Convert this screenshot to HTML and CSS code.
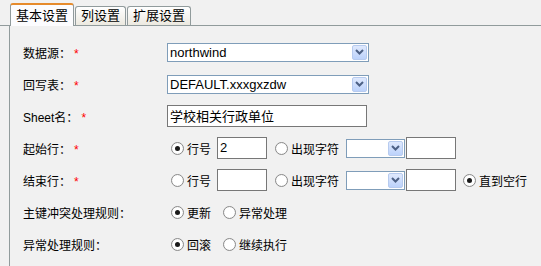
FILE: index.html
```html
<!DOCTYPE html>
<html lang="zh-CN">
<head>
  <meta charset="UTF-8" />
  <title>基本设置</title>
  <link rel="stylesheet" href="styles.css">
</head>
<body>

<div class="tabs">
  <div class="tab active">基本设置</div>
  <div class="tab">列设置</div>
  <div class="tab">扩展设置</div>
</div>

<div class="panel">
  <div class="row">
    <div class="label">数据源：<span class="req">*</span></div>
    <div class="ctrl">
      <div class="select wide"><span>northwind</span><i class="btn"><svg width="9" height="6" viewBox="0 0 9 6"><path d="M1 1l3.5 3.5L8 1" fill="none" stroke="#4d6185" stroke-width="2"/></svg></i></div>
    </div>
  </div>

  <div class="row">
    <div class="label">回写表：<span class="req">*</span></div>
    <div class="ctrl">
      <div class="select wide"><span>DEFAULT.xxxgxzdw</span><i class="btn"><svg width="9" height="6" viewBox="0 0 9 6"><path d="M1 1l3.5 3.5L8 1" fill="none" stroke="#4d6185" stroke-width="2"/></svg></i></div>
    </div>
  </div>

  <div class="row">
    <div class="label">Sheet名：<span class="req">*</span></div>
    <div class="ctrl">
      <div class="input wide">学校相关行政单位</div>
    </div>
  </div>

  <div class="row">
    <div class="label">起始行：<span class="req">*</span></div>
    <div class="ctrl">
      <span class="radio on"></span><span class="opt">行号</span>
      <div class="input small">2</div>
      <span class="radio"></span><span class="opt">出现字符</span>
      <div class="select short"><span></span><i class="btn"><svg width="9" height="6" viewBox="0 0 9 6"><path d="M1 1l3.5 3.5L8 1" fill="none" stroke="#4d6185" stroke-width="2"/></svg></i></div>
      <div class="input small"></div>
    </div>
  </div>

  <div class="row">
    <div class="label">结束行：<span class="req">*</span></div>
    <div class="ctrl">
      <span class="radio"></span><span class="opt">行号</span>
      <div class="input small"></div>
      <span class="radio"></span><span class="opt">出现字符</span>
      <div class="select short"><span></span><i class="btn"><svg width="9" height="6" viewBox="0 0 9 6"><path d="M1 1l3.5 3.5L8 1" fill="none" stroke="#4d6185" stroke-width="2"/></svg></i></div>
      <div class="input small"></div>
      <span class="radio on gap"></span><span class="opt">直到空行</span>
    </div>
  </div>

  <div class="row">
    <div class="label">主键冲突处理规则：</div>
    <div class="ctrl">
      <span class="radio on"></span><span class="opt pair">更新</span>
      <span class="radio"></span><span class="opt">异常处理</span>
    </div>
  </div>

  <div class="row">
    <div class="label">异常处理规则：</div>
    <div class="ctrl">
      <span class="radio on"></span><span class="opt pair">回滚</span>
      <span class="radio"></span><span class="opt">继续执行</span>
    </div>
  </div>
</div>

</body>
</html>
```

FILE: styles.css
```css
body {
  margin: 0;
  background: #f1f1f1;
  font-family: "Liberation Sans", "Noto Sans CJK SC", sans-serif;
  font-size: 12px;
  color: #000;
  overflow: hidden;
}

.tabs {
  display: flex;
  align-items: flex-end;
  height: 25px;
  padding-left: 10px;
  border-bottom: 1px solid #919b9c;
}

.tab {
  height: 18px;
  line-height: 18px;
  padding: 0 5px;
  margin-right: 1px;
  border: 1px solid #919b9c;
  border-bottom: none;
  border-radius: 3px 3px 0 0;
  background: linear-gradient(#ffffff, #ece9e0);
  font-size: 13px;
}

.tab.active {
  height: 20px;
  line-height: 21px;
  border-top: 2px solid #e68b2c;
  background: #fcfcfe;
  margin-bottom: -1px;
  padding-bottom: 1px;
}

.panel {
  margin-left: 9px;
  border-left: 1px solid #919b9c;
  padding-top: 10px;
  height: 230px;
}

.row {
  display: flex;
  align-items: center;
  height: 32px;
}

.label {
  width: 144px;
  padding-left: 13px;
  font-size: 12px;
}

.req {
  color: #f00;
  margin-left: 3px;
}

.ctrl {
  display: flex;
  align-items: center;
}

.select {
  display: flex;
  align-items: center;
  justify-content: space-between;
  height: 17px;
  border: 1px solid #7f9db9;
  background: #fff;
  padding: 0 1px 0 2px;
  font-size: 13px;
}

.select.wide {
  width: 197px;
}

.select.short {
  width: 54px;
  margin-left: 7px;
}

.btn {
  display: flex;
  align-items: center;
  justify-content: center;
  width: 13px;
  height: 13px;
  border: 1px solid #b7cbef;
  border-radius: 2px;
  background: linear-gradient(#dfe9fd, #bcd2fb);
}

.input {
  height: 20px;
  line-height: 20px;
  border: 1px solid #777;
  background: #fff;
  padding: 0 2px;
  font-size: 13px;
  box-sizing: border-box;
}

.input.wide {
  width: 200px;
  height: 22px;
  line-height: 21px;
}

.input.small {
  width: 50px;
  height: 22px;
  margin: 0 4px 0 6px;
}

.select.short + .input.small {
  margin: 0 0 0 1px;
}

.radio {
  width: 13px;
  height: 13px;
  box-sizing: border-box;
  border: 1px solid #8a8a8a;
  border-radius: 50%;
  background: radial-gradient(circle, #fff 55%, #e6e6e6);
  margin-left: 4px;
  margin-right: 3px;
  position: relative;
}

.radio.on::after {
  content: "";
  position: absolute;
  left: 3px;
  top: 3px;
  width: 5px;
  height: 5px;
  border-radius: 50%;
  background: #1a1a1a;
}

.radio.gap {
  margin-left: 7px;
}

.opt {
  font-size: 12px;
}

.opt.pair {
  margin-right: 8px;
}
```
